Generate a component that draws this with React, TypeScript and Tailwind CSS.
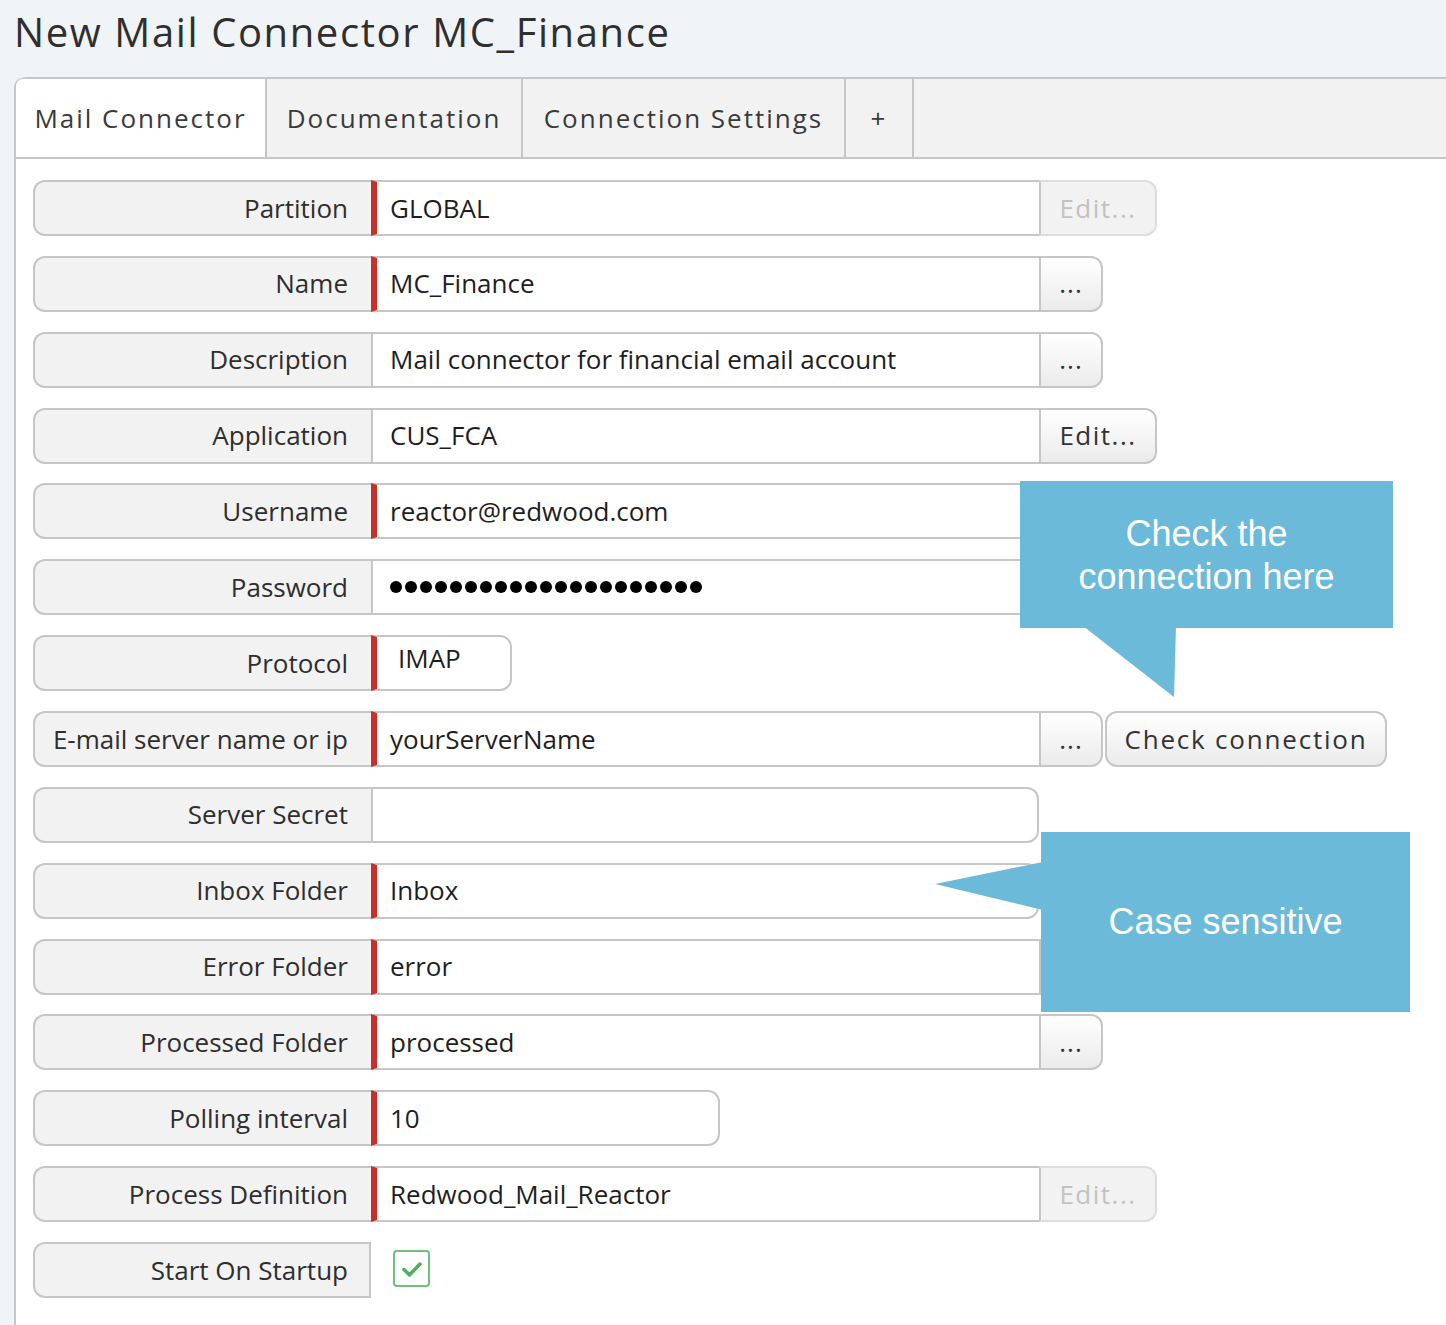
import React from "react";

type Btn = "edit" | "editOff" | "dots";

type Field = {
  label: string;
  value?: string;
  req?: boolean;
  btn?: Btn;
  width?: number;
  kind?: "text" | "password" | "select" | "check";
  extra?: boolean;
};

const fields: Field[] = [
  { label: "Partition", value: "GLOBAL", req: true, btn: "editOff" },
  { label: "Name", value: "MC_Finance", req: true, btn: "dots" },
  { label: "Description", value: "Mail connector for financial email account", btn: "dots" },
  { label: "Application", value: "CUS_FCA", btn: "edit" },
  { label: "Username", value: "reactor@redwood.com", req: true, btn: "dots" },
  { label: "Password", kind: "password", btn: "dots" },
  { label: "Protocol", value: "IMAP", req: true, kind: "select", width: 141 },
  { label: "E-mail server name or ip", value: "yourServerName", req: true, btn: "dots", extra: true },
  { label: "Server Secret", value: "" },
  { label: "Inbox Folder", value: "Inbox", req: true },
  { label: "Error Folder", value: "error", req: true, btn: "dots" },
  { label: "Processed Folder", value: "processed", req: true, btn: "dots" },
  { label: "Polling interval", value: "10", req: true, width: 349 },
  { label: "Process Definition", value: "Redwood_Mail_Reactor", req: true, btn: "editOff" },
  { label: "Start On Startup", kind: "check" },
];

const tabs = [
  { name: "Mail Connector", w: "w-[251px]", active: true },
  { name: "Documentation", w: "w-[256px]" },
  { name: "Connection Settings", w: "w-[323px]" },
  { name: "+", w: "w-[68px]" },
];

const SideButton = ({ type }: { type: Btn }) => {
  if (type === "dots") {
    return (
      <div className="w-[64px] h-[56px] border-2 border-[#c6c6c6] rounded-r-[12px] bg-gradient-to-b from-white to-[#ebebeb] flex items-center justify-center text-[26px] text-[#333] tracking-[1px]">
        ...
      </div>
    );
  }
  return (
    <div
      className={
        type === "edit"
          ? "w-[118px] h-[56px] border-2 border-[#c6c6c6] rounded-r-[12px] bg-gradient-to-b from-white to-[#ebebeb] flex items-center justify-center text-[26px] tracking-[1.5px] text-[#333]"
          : "w-[118px] h-[56px] border-2 border-l-[#c6c6c6] border-y-[#dddddd] border-r-[#dddddd] rounded-r-[12px] bg-[#f2f2f2] flex items-center justify-center text-[26px] tracking-[1.5px] text-[#c2c2c2]"
      }
    >
      Edit...
    </div>
  );
};

const FormRow = ({ f }: { f: Field }) => {
  if (f.kind === "check") {
    return (
      <div className="flex items-center h-[56px]">
        <div className="w-[338px] h-[56px] border-2 border-[#c6c6c6] rounded-l-[12px] bg-[#f2f2f2] flex items-center justify-end pr-[21px] text-[26px] text-[#2e2e2e]">
          {f.label}
        </div>
        <div className="ml-[22px] mb-[3px] w-[37px] h-[37px] border-2 border-[#6cc27a] rounded-[4px] bg-white flex items-center justify-center">
          <svg width="22" height="18" viewBox="0 0 22 18" fill="none">
            <path d="M3 9.5l5.5 5.5L19 4" stroke="#4cb05c" strokeWidth="3.5" strokeLinecap="round" strokeLinejoin="round" />
          </svg>
        </div>
      </div>
    );
  }

  const hasBtn = !!f.btn;
  return (
    <div className="flex items-center h-[56px]">
      <div className="w-[338px] h-[56px] border-2 border-r-0 border-[#c6c6c6] rounded-l-[12px] bg-[#f2f2f2] flex items-center justify-end pr-[23px] text-[26px] text-[#2e2e2e] whitespace-nowrap">
        {f.label}
      </div>
      <div
        style={{ width: f.width ?? 668 }}
        className={
          "h-[56px] border-y-2 border-[#c6c6c6] bg-white flex items-center text-[26px] text-[#1e1e1e] whitespace-nowrap " +
          (f.req ? "border-l-[6px] border-l-[#c9302c] pl-[13px] " : "border-l-2 pl-[17px] ") +
          (hasBtn ? "" : "border-r-2 rounded-r-[12px]")
        }
      >
        {f.kind === "password" ? (
          <div className="flex gap-[3px]">
            {Array.from({ length: 21 }).map((_, i) => (
              <span key={i} className="w-[12px] h-[12px] rounded-full bg-black" />
            ))}
          </div>
        ) : f.kind === "select" ? (
          <span className="ml-[8px] mb-[10px]">{f.value}</span>
        ) : (
          <span>{f.value}</span>
        )}
      </div>
      {f.btn && <SideButton type={f.btn} />}
      {f.extra && (
        <div className="ml-[2px] w-[282px] h-[56px] border-2 border-[#c6c6c6] rounded-[12px] bg-gradient-to-b from-white to-[#ebebeb] flex items-center justify-center text-[26px] tracking-[1.8px] text-[#333]">
          Check connection
        </div>
      )}
    </div>
  );
};

export default function App() {
  return (
    <div className="relative w-[1446px] h-[1325px] overflow-hidden bg-[#f1f4f7] font-['Open_Sans',sans-serif] flex flex-col">
      {/* Title */}
      <div className="h-[77px] pl-[14px] pt-[8px] text-[40px] leading-[48px] tracking-[1.6px] text-[#2f2f2f] whitespace-nowrap">
        New Mail Connector MC_Finance
      </div>

      {/* Panel */}
      <div className="ml-[14px] flex-1 bg-white border-l-2 border-[#c6c6c6] rounded-tl-[10px] flex flex-col">
        {/* Tabs */}
        <div className="h-[82px] flex bg-[#f2f2f2] border-t-2 border-b-2 border-[#c6c6c6] rounded-tl-[10px]">
          {tabs.map((t) => (
            <div
              key={t.name}
              className={
                t.w +
                " h-full flex items-center justify-center border-r-2 border-[#c6c6c6] text-[26px] tracking-[2px] text-[#3a3a3a] " +
                (t.active ? "bg-white rounded-tl-[8px]" : "")
              }
            >
              {t.name}
            </div>
          ))}
        </div>

        {/* Form */}
        <div className="pl-[17px] pt-[21px] flex flex-col gap-[19.86px]">
          {fields.map((f) => (
            <FormRow key={f.label} f={f} />
          ))}
        </div>
      </div>

      {/* Callout: check connection */}
      <div className="absolute left-[1020px] top-[481px] w-[373px] h-[147px] bg-[#6cbad9] flex items-center justify-center text-center text-white text-[36px] leading-[43px] font-['Liberation_Sans',Arial,sans-serif]">
        Check the
        <br />
        connection here
      </div>
      <svg className="absolute left-[1080px] top-[626px]" width="100" height="75" viewBox="0 0 100 75">
        <polygon points="3,0 96,0 94,71" fill="#6cbad9" />
      </svg>

      {/* Callout: case sensitive */}
      <div className="absolute left-[1041px] top-[832px] w-[369px] h-[180px] bg-[#6cbad9] flex items-center justify-center text-white text-[36px] font-['Liberation_Sans',Arial,sans-serif]">
        Case sensitive
      </div>
      <svg className="absolute left-[933px] top-[860px]" width="110" height="52" viewBox="0 0 110 52">
        <polygon points="110,2 2,24 110,50" fill="#6cbad9" />
      </svg>
    </div>
  );
}
